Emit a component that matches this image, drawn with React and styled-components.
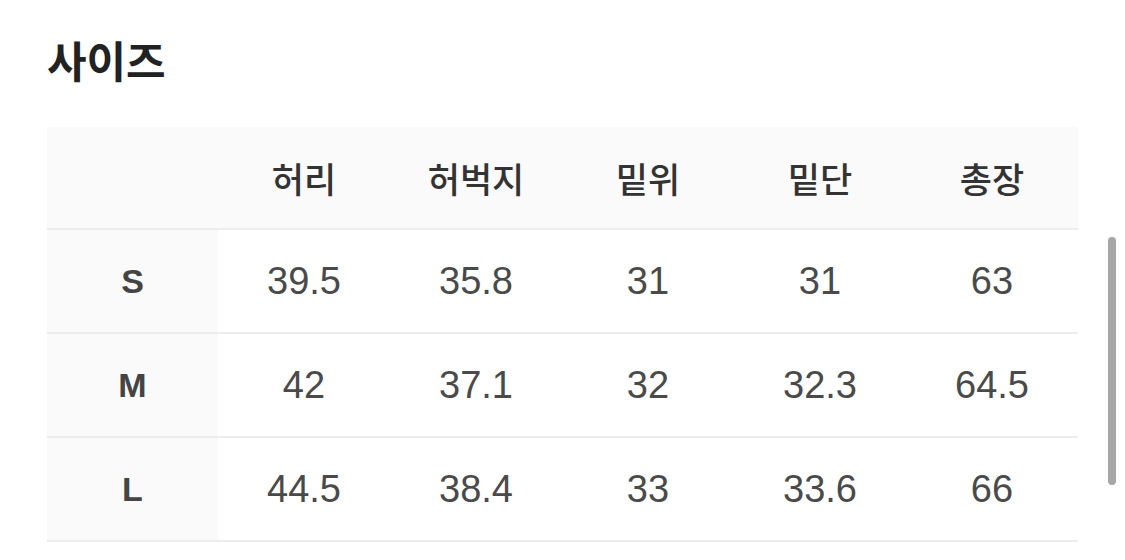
import React from 'react'
import styled, { createGlobalStyle } from 'styled-components'

const GlobalStyle = createGlobalStyle`
  html, body {
    margin: 0;
    padding: 0;
    background: #fff;
  }
  body {
    font-family: "Liberation Sans", "Noto Sans CJK KR", sans-serif;
    overflow: hidden;
  }
`

const columns = ['허리', '허벅지', '밑위', '밑단', '총장']

const rows = [
  { size: 'S', values: ['39.5', '35.8', '31', '31', '63'] },
  { size: 'M', values: ['42', '37.1', '32', '32.3', '64.5'] },
  { size: 'L', values: ['44.5', '38.4', '33', '33.6', '66'] }
]

const App = () => {
  return (<Page>
    <GlobalStyle />
    <Title>사이즈</Title>
    <Table>
      <HeaderRow>
        <HeadCell />
        {columns.map((c) => <HeadCell key={c}>{c}</HeadCell>)}
      </HeaderRow>
      {rows.map((r) => (
        <BodyRow key={r.size}>
          <SizeCell>{r.size}</SizeCell>
          {r.values.map((v, i) => <ValueCell key={i}>{v}</ValueCell>)}
        </BodyRow>
      ))}
    </Table>
    <Scrollbar />
  </Page>)
}

const Page = styled.div`
  position: relative;
  width: 1125px;
  height: 560px;
  box-sizing: border-box;
  padding: 0 47px;
  overflow: hidden;
`

const Title = styled.h2`
  margin: 0;
  padding-top: 32px;
  height: 127px;
  box-sizing: border-box;
  font-family: "Noto Sans CJK KR", sans-serif;
  font-size: 43px;
  line-height: 54px;
  font-weight: 700;
  color: #222;
`

const Table = styled.div`
  display: flex;
  flex-direction: column;
  width: 1031px;
`

const Row = styled.div`
  display: grid;
  grid-template-columns: 171px repeat(5, 172px);
  border-bottom: 2px solid #ededed;
`

const HeaderRow = styled(Row)`
  height: 103px;
  box-sizing: border-box;
  background: #fafafa;
`

const BodyRow = styled(Row)`
  height: 104px;
  box-sizing: border-box;
`

const Cell = styled.div`
  display: flex;
  align-items: center;
  justify-content: center;
`

const HeadCell = styled(Cell)`
  font-family: "Noto Sans CJK KR", sans-serif;
  font-size: 35px;
  font-weight: 500;
  color: #333;
`

const SizeCell = styled(Cell)`
  background: #fafafa;
  font-size: 34px;
  font-weight: 700;
  color: #444;
`

const ValueCell = styled(Cell)`
  font-size: 38px;
  color: #4a4a4a;
`

const Scrollbar = styled.div`
  position: absolute;
  left: 1108px;
  top: 237px;
  width: 8px;
  height: 248px;
  border-radius: 4px;
  background: #a6a6a6;
`

export default App
